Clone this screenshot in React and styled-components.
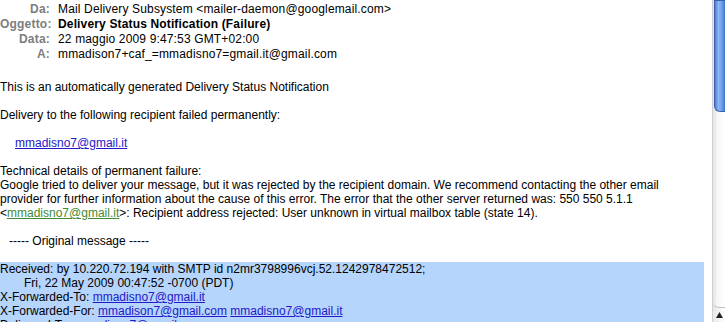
import React from 'react'
import { styled, createGlobalStyle } from 'styled-components'

const GlobalStyle = createGlobalStyle`
  html, body {
    margin: 0;
    padding: 0;
    background: #ffffff;
    overflow: hidden;
  }
  body {
    font-family: 'Liberation Sans', Arial, Helvetica, sans-serif;
    font-size: 12px;
    color: #000;
  }
`

const headers = [
  { label: 'Da:', value: 'Mail Delivery Subsystem <mailer-daemon@googlemail.com>' },
  { label: 'Oggetto:', value: 'Delivery Status Notification (Failure)', bold: true },
  { label: 'Data:', value: '22 maggio 2009 9:47:53 GMT+02:00' },
  { label: 'A:', value: 'mmadison7+caf_=mmadisno7=gmail.it@gmail.com' },
]

const App = () => {
  return (
    <StWindow>
      <GlobalStyle />
      <StMain>
        <StHeaderGrid>
          {headers.map((h) => (
            <React.Fragment key={h.label}>
              <StLabel>{h.label}</StLabel>
              <StValue $bold={h.bold}>{h.value}</StValue>
            </React.Fragment>
          ))}
        </StHeaderGrid>
        <StSeparator />
        <StBody>
          <StPara>This is an automatically generated Delivery Status Notification</StPara>
          <StPara>Delivery to the following recipient failed permanently:</StPara>
          <StPara $indent={15}>
            <StLink href='#'>mmadisno7@gmail.it</StLink>
          </StPara>
          <StPara>
            Technical details of permanent failure:
            <br />
            Google tried to deliver your message, but it was rejected by the recipient domain. We
            recommend contacting the other email provider for further information about the cause of
            this error. The error that the other server returned was: 550 550 5.1.1 &lt;
            <StVisitedLink href='#'>mmadisno7@gmail.it</StVisitedLink>&gt;: Recipient address
            rejected: User unknown in virtual mailbox table (state 14).
          </StPara>
          <StPara $indent={9}>----- Original message -----</StPara>
          <StQuoted>
            <StLine>Received: by 10.220.72.194 with SMTP id n2mr3798996vcj.52.1242978472512;</StLine>
            <StLine $indent={24}>Fri, 22 May 2009 00:47:52 -0700 (PDT)</StLine>
            <StLine>
              X-Forwarded-To: <StLink href='#'>mmadisno7@gmail.it</StLink>
            </StLine>
            <StLine>
              X-Forwarded-For: <StLink href='#'>mmadison7@gmail.com</StLink>{' '}
              <StLink href='#'>mmadisno7@gmail.it</StLink>
            </StLine>
            <StLine>
              Delivered-To: <StLink href='#'>mmadison7@gmail.com</StLink>
            </StLine>
          </StQuoted>
        </StBody>
      </StMain>
      <StScrollbar>
        <StThumb />
        <StTrack />
        <StArrow>
          <svg width='7' height='6' viewBox='0 0 7 6'>
            <path d='M3.5 0 L7 6 L0 6 Z' fill='#222' />
          </svg>
        </StArrow>
      </StScrollbar>
    </StWindow>
  )
}

export default App

const StWindow = styled.div`
  display: flex;
  width: 725px;
  height: 322px;
  overflow: hidden;
`

const StMain = styled.div`
  flex: 1;
  display: flex;
  flex-direction: column;
  padding-right: 8px;
  min-width: 0;
`

const StHeaderGrid = styled.div`
  display: grid;
  grid-template-columns: 50px 1fr;
  column-gap: 8px;
  padding-top: 2px;
  line-height: 15px;
`

const StLabel = styled.div`
  text-align: right;
  font-weight: bold;
  color: #7d7d7d;
  white-space: nowrap;
  letter-spacing: 0.2px;
`

const StValue = styled.div`
  font-weight: ${(p) => (p.$bold ? 'bold' : 'normal')};
  white-space: nowrap;
  letter-spacing: 0.15px;
`

const StSeparator = styled.div`
  height: 1px;
  background: #c9c9c9;
  margin-top: 12px;
`

const StBody = styled.div`
  padding-top: 6px;
  line-height: 14px;
`

const StPara = styled.div`
  margin: 0 0 14px;
  padding-left: ${(p) => p.$indent || 0}px;
`

const StLink = styled.a`
  color: #2418c9;
  text-decoration: underline;
`

const StVisitedLink = styled.a`
  color: #3f8a33;
  text-decoration: underline;
`

const StQuoted = styled.div`
  background: #b5d5fc;
`

const StLine = styled.div`
  padding-left: ${(p) => p.$indent || 0}px;
  white-space: nowrap;
`

const StScrollbar = styled.div`
  width: 12px;
  flex-shrink: 0;
  display: flex;
  flex-direction: column;
  border-left: 1px solid #cfcfcf;
  background: linear-gradient(to right, #e4e4e4, #f8f8f8 40%, #ffffff);
`

const StThumb = styled.div`
  height: 110px;
  margin-left: 1px;
  border: 1px solid #3a5fb0;
  border-right: none;
  border-radius: 0 0 0 6px;
  background: linear-gradient(to right, #4b7fd6, #8db8f2 35%, #6a9de6 70%, #3f72cc);
`

const StTrack = styled.div`
  flex: 1;
  border-bottom: 1px solid #bdbdbd;
  border-radius: 0 0 0 6px;
`

const StArrow = styled.div`
  height: 14px;
  display: flex;
  align-items: center;
  justify-content: center;
  background: linear-gradient(to right, #e8e8e8, #ffffff);
`
